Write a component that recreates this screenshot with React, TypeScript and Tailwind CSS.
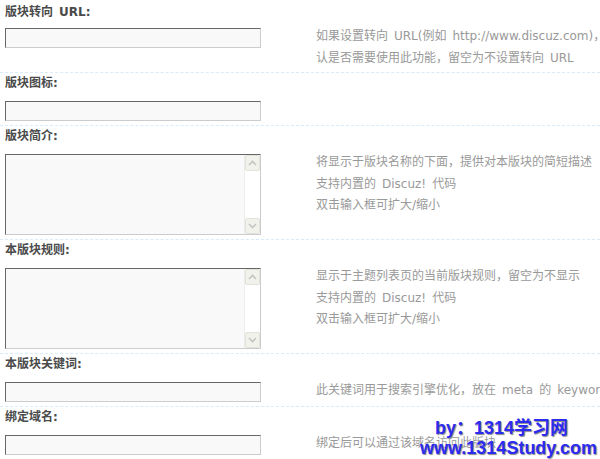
import React from "react";

interface Setting {
  label: string;
  type: "input" | "textarea";
  tips: string[];
}

// SimSun-like wide space between Chinese and Latin text
const sp = (s: string) => s.replace(/ /g, "\u2002");

const settings: Setting[] = [
  {
    label: "版块转向 URL:",
    type: "input",
    tips: [
      "如果设置转向 URL(例如 http://www.discuz.com)，用户点击本分区将进入转向中设置的 URL。一旦设定将无法进入版块页面，请确",
      "认是否需要使用此功能，留空为不设置转向 URL",
    ],
  },
  { label: "版块图标:", type: "input", tips: [] },
  {
    label: "版块简介:",
    type: "textarea",
    tips: ["将显示于版块名称的下面，提供对本版块的简短描述", "支持内置的 Discuz! 代码", "双击输入框可扩大/缩小"],
  },
  {
    label: "本版块规则:",
    type: "textarea",
    tips: ["显示于主题列表页的当前版块规则，留空为不显示", "支持内置的 Discuz! 代码", "双击输入框可扩大/缩小"],
  },
  {
    label: "本版块关键词:",
    type: "input",
    tips: ['此关键词用于搜索引擎优化，放在 meta 的 keyword 标签中，多个关键字间请用半角逗号 "," 隔开'],
  },
  { label: "绑定域名:", type: "input", tips: ["绑定后可以通过该域名访问此版块"] },
];

const TextInput = () => (
  <input
    type="text"
    className="block w-[256px] h-[20px] border border-t-[#666] border-l-[#666] border-r-[#ccc] border-b-[#ccc] bg-[#f9f9f9] px-1 text-xs outline-none"
  />
);

const ScrollButton = ({ dir }: { dir: "up" | "down" }) => (
  <div className="flex h-[16px] w-[15px] items-center justify-center rounded-[2px] border border-[#e2e2da] bg-[#f2f2ec]">
    <svg width="9" height="6" viewBox="0 0 9 6">
      <path
        d={dir === "up" ? "M1 5 L4.5 1.5 L8 5" : "M1 1 L4.5 4.5 L8 1"}
        fill="none"
        stroke="#c4c4c4"
        strokeWidth="1.6"
      />
    </svg>
  </div>
);

const TextArea = () => (
  <div className="flex w-[256px] h-[81px] border border-t-[#666] border-l-[#666] border-r-[#ccc] border-b-[#ccc] bg-[#f9f9f9]">
    <textarea className="flex-1 resize-none overflow-hidden bg-transparent p-1 text-xs outline-none" />
    <div className="flex w-[16px] flex-col justify-between border-l border-[#ededed] bg-white">
      <ScrollButton dir="up" />
      <ScrollButton dir="down" />
    </div>
  </div>
);

export default function App() {
  return (
    <div className="relative h-screen w-full overflow-hidden bg-white font-['DejaVu_Sans','Noto_Sans_CJK_SC',sans-serif]">
      {settings.map((s, i) => (
        <div key={s.label} className={i === 0 ? "" : "border-t border-dashed border-[#d9ebf9]"}>
          <div
            className={
              "h-[26px] pl-[5px] text-xs leading-[14px] font-bold text-[#4a4a4a] " + (i === 0 ? "pt-[5px]" : "pt-[3px]")
            }
          >
            {sp(s.label)}
          </div>
          <div className="flex items-start pb-[3px]">
            <div className="w-[316px] shrink-0 pl-[5px] pt-[2px] pb-[1px]">
              {s.type === "input" ? <TextInput /> : <TextArea />}
            </div>
            <div className="whitespace-nowrap text-xs leading-[21.6px] text-[#999]">
              {s.tips.map((t) => (
                <div key={t}>{sp(t)}</div>
              ))}
            </div>
          </div>
        </div>
      ))}

      {/* watermark */}
      <div className="absolute left-[420px] top-[418px] font-['Liberation_Sans','Noto_Sans_CJK_SC',sans-serif] text-[18px] leading-[20px] font-bold text-[#2b2bf2] [text-shadow:1px_1px_1px_#8a8a8a]">
        <div className="ml-[15px]">by：1314学习网</div>
        <div>www.1314Study.com</div>
      </div>
    </div>
  );
}
